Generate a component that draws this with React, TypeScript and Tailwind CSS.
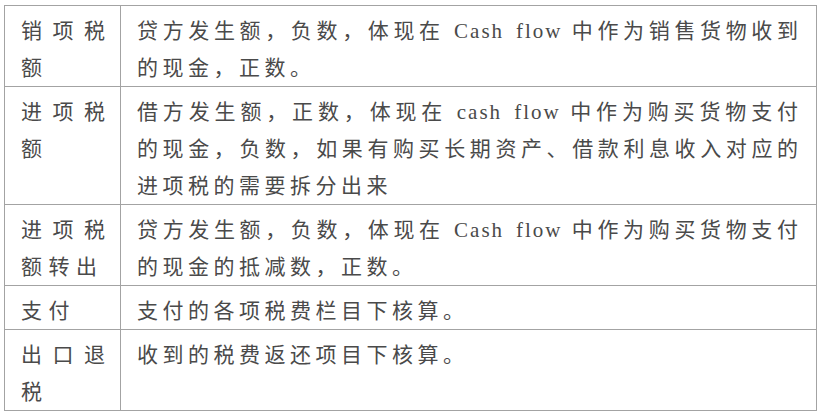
const cjk = "font-['Noto_Sans_CJK_SC',sans-serif]";

type Line = { text: React.ReactNode; full?: boolean };

interface RowShape {
  label: Line[];
  body: Line[];
}

// SimSun-style half-width Latin: a serif with a little tracking
const Latin = ({ children }: { children: string }) => (
  <span className="font-['Liberation_Serif','Noto_Sans_CJK_SC',serif] tracking-[2px]">
    {children}
  </span>
);

const rows: RowShape[] = [
  {
    label: [{ text: "销项税", full: true }, { text: "额" }],
    body: [
      {
        text: (
          <>
            贷方发生额，负数，体现在 <Latin>Cash flow</Latin> 中作为销售货物收到
          </>
        ),
        full: true,
      },
      { text: "的现金，正数。" },
    ],
  },
  {
    label: [{ text: "进项税", full: true }, { text: "额" }],
    body: [
      {
        text: (
          <>
            借方发生额，正数，体现在 <Latin>cash flow</Latin> 中作为购买货物支付
          </>
        ),
        full: true,
      },
      { text: "的现金，负数，如果有购买长期资产、借款利息收入对应的", full: true },
      { text: "进项税的需要拆分出来" },
    ],
  },
  {
    label: [{ text: "进项税", full: true }, { text: "额转出" }],
    body: [
      {
        text: (
          <>
            贷方发生额，负数，体现在 <Latin>Cash flow</Latin> 中作为购买货物支付
          </>
        ),
        full: true,
      },
      { text: "的现金的抵减数，正数。" },
    ],
  },
  {
    label: [{ text: "支付" }],
    body: [{ text: "支付的各项税费栏目下核算。" }],
  },
  {
    label: [{ text: "出口退", full: true }, { text: "税" }],
    body: [{ text: "收到的税费返还项目下核算。" }],
  },
];

function Lines({ lines, spacing }: { lines: Line[]; spacing: string }) {
  return (
    <>
      {lines.map((line, i) =>
        line.full ? (
          <div key={i} className="h-[37px] overflow-hidden text-justify [text-align-last:justify]">
            {line.text}
          </div>
        ) : (
          <div key={i} className={`h-[37px] overflow-hidden ${spacing}`}>
            {line.text}
          </div>
        )
      )}
    </>
  );
}

export default function App() {
  return (
    <div className="min-h-[415px] w-[822px] bg-white pl-[4px] pt-[5px]">
      <div
        className={`grid w-[813px] grid-cols-[116px_696px] border-l border-t border-[#a3a3a3] text-[21px] leading-[37px] text-[#4a4a4a] ${cjk}`}
      >
        {rows.map((row, i) => (
          <div key={i} className="contents">
            <div className="border-b border-r border-[#a3a3a3] pb-[1px] pl-[16px] pr-[15px] pt-[5px]">
              <Lines lines={row.label} spacing="tracking-[6.5px]" />
            </div>
            <div className="border-b border-r border-[#a3a3a3] pb-[1px] pl-[16px] pr-[18px] pt-[5px]">
              <Lines lines={row.body} spacing="tracking-[4.5px]" />
            </div>
          </div>
        ))}
      </div>
    </div>
  );
}
